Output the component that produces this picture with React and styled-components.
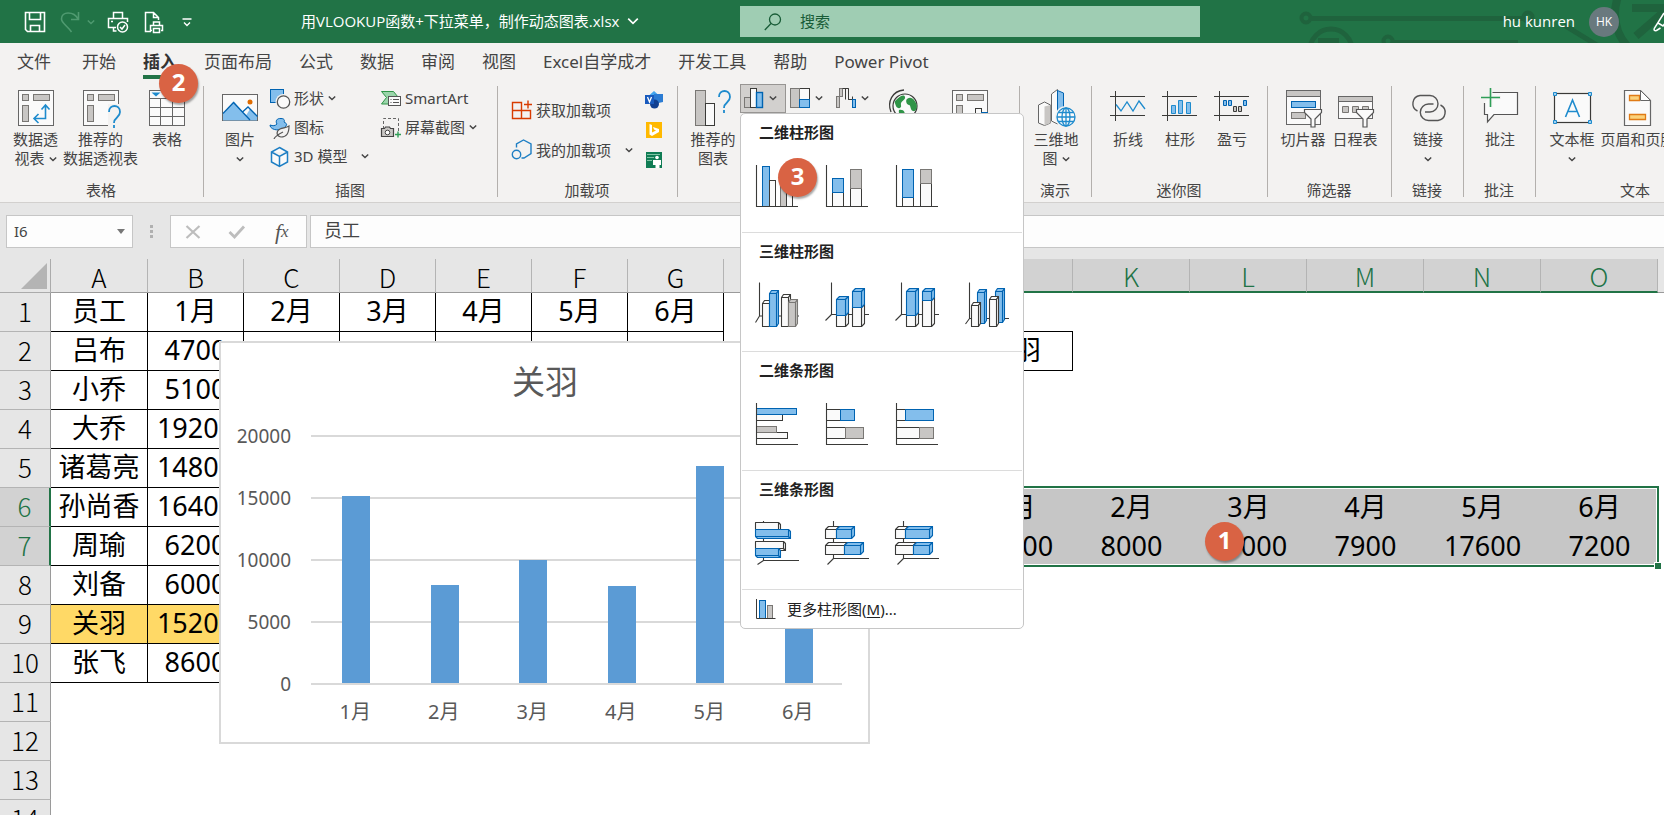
import React, { useState } from 'react';
import styled, { createGlobalStyle, css } from 'styled-components';

const GREEN = '#217346';
const BLUE = '#0063b1';
const BLUE_FILL = '#83beec';
const LINE = '#3a3a38';
const GRAY = '#797774';
const GRAY_FILL = '#c8c6c4';
const WHITE_FILL = '#fafafa';

/* ---------- small drawing helpers ---------- */

const R = ({ x, y, w, h, fill = WHITE_FILL, stroke = LINE, sw = 1 }) => (
  <rect x={x} y={y} width={w} height={h} fill={fill} stroke={stroke} strokeWidth={sw} />
);

const kinds = {
  blue: { fill: BLUE_FILL, stroke: BLUE },
  white: { fill: WHITE_FILL, stroke: LINE },
  gray: { fill: GRAY_FILL, stroke: GRAY },
};

// x1, y1, x2, y2 of the front face, dx and dy are the depth of the solid
const Box3 = ({ a, k = 'white', dx = 3, dy = -3 }) => {
  const [x1, y1, x2, y2] = a;
  const c = kinds[k];
  const edge = dy < 0 ? y1 : y2;
  return (
    <g fill={c.fill} stroke={c.stroke} strokeWidth="1.1" strokeLinejoin="round">
      <path d={`M${x1} ${edge}l${dx} ${dy}H${x2 + dx}L${x2} ${edge}z`} />
      <path d={`M${x2} ${y1}l${dx} ${dy}V${y2 + dy}L${x2} ${y2}z`} />
      <path d={`M${x1} ${y1}H${x2}V${y2}H${x1}z`} />
    </g>
  );
};

const Flat = ({ a, k = 'white' }) => {
  const [x1, y1, x2, y2] = a;
  return <R x={x1} y={y1} w={x2 - x1} h={y2 - y1} {...kinds[k]} />;
};

const Axis = ({ d = 'M2.5 2V43.5H44' }) => (
  <path d={d} fill="none" stroke={LINE} strokeWidth="1.1" />
);

const Chevron = ({ size = 8, color = '#444', sw = 1.4 }) => (
  <svg width={size} height={size} viewBox="0 0 8 8" fill="none" stroke={color} strokeWidth={sw}>
    <path d="M.8 2.4L4 5.6l3.2-3.2" />
  </svg>
);

const Svg = ({ s = 40, children }) => (
  <svg width={s} height={s} viewBox={`0 0 ${s} ${s}`} fill="none">
    {children}
  </svg>
);

/* ---------- ribbon icons ---------- */

const PivotBase = () => (
  <>
    <R x={2.5} y={2.5} w={35} h={35} stroke="#666" />
    <R x={6.5} y={6.5} w={6} h={6} {...kinds.gray} />
    <R x={17.5} y={6.5} w={16} h={6} {...kinds.gray} />
    <R x={6.5} y={17.5} w={6} h={16} {...kinds.gray} />
  </>
);

const PivotIcon = () => (
  <Svg>
    <PivotBase />
    <path d="M29.5 18v12.5H19M25.5 21.5l4-4.5 4 4.5M22.500 26l-4.500 4.500 4.500 4.500" stroke="#1e8bcd" strokeWidth="1.6" />
  </Svg>
);

const PivotSuggestIcon = () => (
  <Svg>
    <PivotBase />
    <path d="M27 16h13v24H27z" fill="#f3f2f1" />
    <path d="M28 24c0-8 11-8 11 0 0 6-6 5-6 11M33 37v3" stroke="#1e8bcd" strokeWidth="1.8" />
  </Svg>
);

const TableIcon = () => (
  <Svg>
    <R x={2.5} y={2.5} w={35} h={35} stroke="#666" />
    <path d="M2.5 10.5h35M2.5 19.5h35M2.5 28.5h35M13.5 10.5v27M25.5 10.5v27" stroke="#666" />
    <path d="M4.5 4.5h9l-4.5 4z" fill="#1e8bcd" />
  </Svg>
);

const PictureIcon = () => (
  <Svg>
    <R x={2.5} y={6.5} w={35} h={26} stroke="#666" />
    <path d="M3 26l11-12.5 12 14 4-6.5 7 7v4.5H3z" fill={BLUE_FILL} />
    <path d="M3 25.5l10.500-11L30 32M22.500 24l5.500-5 9.500 9.500" stroke={BLUE} strokeWidth="1.3" />
    <circle cx="30" cy="14" r="2.5" fill="#e06c00" />
  </Svg>
);

const ChartSuggestIcon = () => (
  <Svg>
    <R x={2.5} y={2.5} w={10} h={35} {...kinds.gray} />
    <R x={12.5} y={15.5} w={9} h={22} />
    <path d="M26 9c0-8 11-8 11 0 0 6-6 5-6 11M31 22v3" stroke="#1e8bcd" strokeWidth="1.8" />
  </Svg>
);

const GlobeIcon = () => (
  <Svg>
    <circle cx="21" cy="18" r="12" fill={WHITE_FILL} stroke={LINE} strokeWidth="1.2" />
    <path d="M12 12c4-4 8-6 9-3s-5 4-4 8-4 4-5 1-2-4 0-6zM23 11c4-3 7 0 9 4s0 9-3 8-2-6-4-6-4-4-2-6zM15 22c5-1 7 3 5 7-3 0-6-3-5-7z" fill="#2f9447" />
    <path d="M7 24C3 14 8 3 20 2" stroke={LINE} strokeWidth="1.3" />
  </Svg>
);

const PivotChartIcon = () => (
  <Svg>
    <PivotBase />
    <R x={25.5} y={20.5} w={6} h={17} />
    <R x={31.5} y={24.5} w={6} h={13} {...kinds.blue} />
  </Svg>
);

const Map3dIcon = () => (
  <Svg>
    <path d="M2.5 17l6-3 6 3v18l-6 2.500-6-2.500z" fill={WHITE_FILL} stroke="#666" />
    <path d="M8.5 18.5l6-1.5v18l-6 2.5z" fill={GRAY_FILL} />
    <path d="M15.5 6l6-4.500V36l-6-3z" fill={WHITE_FILL} stroke="#666" />
    <path d="M21.5 2.5l6 2.5v18l-6 6z" fill={BLUE_FILL} stroke={BLUE} />
    <circle cx="30" cy="29" r="11" fill="#f3f2f1" />
    <g stroke="#1e8bcd" strokeWidth="1.3">
      <circle cx="30" cy="29" r="9" fill={WHITE_FILL} />
      <ellipse cx="30" cy="29" rx="4" ry="9" />
      <path d="M30 20v18M21 29h18M22.5 24.5h15M22.5 33.5h15" />
    </g>
  </Svg>
);

const SparkFrame = () => (
  <path d="M2 8.5h35M2 27.5h35M7.5 3v30" stroke={LINE} />
);

const SparkLineIcon = () => (
  <Svg>
    <SparkFrame />
    <path d="M8 16.5l5 6.5 6-9 6 9 6-10 6 8" stroke="#1e8bcd" strokeWidth="1.3" />
  </Svg>
);

const SparkColumnIcon = () => (
  <Svg>
    <SparkFrame />
    <g fill={BLUE_FILL} stroke="#1e8bcd">
      <path d="M11.5 17.5h4v8h-4zM18.5 12.5h4v13h-4zM26.5 14.5h4v11h-4z" />
    </g>
  </Svg>
);

const WinLossIcon = () => (
  <Svg>
    <SparkFrame />
    <path d="M11.5 12.5h3v5h-3zM16.5 12.5h3v5h-3zM31.5 12.5h3v5h-3z" fill={BLUE_FILL} stroke={BLUE} />
    <path d="M21.5 18.5h3v5h-3zM26.5 18.5h3v5h-3z" fill={GRAY_FILL} stroke={LINE} />
  </Svg>
);

const Funnel = () => (
  <path d="M21.5 21.5h17v3l-6.5 6.5v8h-4v-8l-6.5-6.5z" fill={WHITE_FILL} stroke="#555" strokeWidth="1.2" />
);

const SlicerIcon = () => (
  <Svg>
    <R x={3.5} y={2.5} w={34} h={34} stroke="#666" />
    <R x={3.5} y={2.5} w={34} h={6} fill={GRAY_FILL} stroke="#666" />
    <R x={8.5} y={13.5} w={24} h={6} {...kinds.blue} />
    <R x={8.5} y={24.5} w={14} h={6} {...kinds.gray} />
    <Funnel />
  </Svg>
);

const TimelineIcon = () => (
  <Svg>
    <R x={3.5} y={8.5} w={34} h={22} stroke="#666" />
    <R x={3.5} y={8.5} w={34} h={5} fill={GRAY_FILL} stroke="#666" />
    <path d="M7.5 18.5h6v6h-6zM17.5 18.5h6v6h-6zM27.5 18.5h6v3h-6z" fill={GRAY_FILL} stroke={GRAY} />
    <Funnel />
  </Svg>
);

const LinkIcon = () => (
  <Svg>
    <g stroke="#555" strokeWidth="1.4">
      <path d="M9.5 23A8.200 8.200 0 0112 7.500h10a8.200 8.200 0 018 8.200c0 4.500-3.500 8.300-8 8.300h-5" />
      <path d="M32.500 17A8.200 8.200 0 0130 32.500H20.500a8.200 8.200 0 01-8.200-8.200c0-4.500 3.700-8.300 8.200-8.300h5" />
    </g>
  </Svg>
);

const CommentIcon = () => (
  <Svg>
    <path d="M12 4.5h25.5v22H14l-6.5 7.5v-7.5H4.500V15" fill={WHITE_FILL} stroke="#555" strokeWidth="1.2" />
    <path d="M2 9.5h19M11 0v19" stroke="#f3f2f1" strokeWidth="3" />
    <path d="M1 9.5h19M10.5 0v19" stroke="#2f9e57" strokeWidth="1.6" />
  </Svg>
);

const TextBoxIcon = () => (
  <Svg>
    <R x={2.5} y={5.5} w={36} h={29} sw={1.2} />
    <path d="M13.5 29l7-17 7 17M16 23.5h9" stroke="#1e8bcd" strokeWidth="1.6" />
    <g fill="#9fd0f0" stroke="#1e8bcd">
      <path d="M1.5 4.5h3v3h-3zM36.5 4.5h3v3h-3zM1.5 32.5h3v3h-3zM36.5 32.5h3v3h-3z" />
    </g>
  </Svg>
);

const HeaderFooterIcon = () => (
  <Svg>
    <path d="M6.5 2.5h16l10 10v25h-26z" fill={WHITE_FILL} stroke="#666" strokeWidth="1.2" />
    <path d="M11.5 7.5h10v5h-10zM11.5 26.5h16v5h-16z" fill="#fbd27b" stroke="#e07b16" strokeWidth="1.3" />
    <path d="M22.5 2.5v10h10z" fill="#fff" stroke="#666" />
  </Svg>
);

const ShapesIcon = () => (
  <Svg s={22}>
    <R x={1.5} y={1.5} w={13} h={13} {...kinds.blue} />
    <circle cx="14.5" cy="14" r="8" fill="#f3f2f1" />
    <circle cx="14.5" cy="14" r="6.2" fill={WHITE_FILL} stroke="#555" strokeWidth="1.3" />
  </Svg>
);

const GlyphsIcon = () => (
  <Svg s={22}>
    <path d="M1 8c3 1 5 1 7-1C6 4 8 1 12 1.5c3 0 4 1.5 3 3.5 2 1 3 2 2.500 3-2 5-12 7-16 2z" fill={BLUE_FILL} stroke={BLUE} />
    <path d="M20 9c0 8-3 11-8 11-5-1-5-6-1-8 3-1.500 6-1 9-3zM5 22c1-3 5-5 9-7" fill="#f3f2f1" stroke="#555" strokeWidth="1.2" />
  </Svg>
);

const CubeIcon = () => (
  <Svg s={22}>
    <path d="M10.5 1.5l8 4.500v10l-8 4.500-8-4.500V6zM2.500 6l8 4.500 8-4.500M10.500 10.500v10" stroke="#1e7fc4" strokeWidth="1.5" fill="#fafafa" />
  </Svg>
);

const SmartArtIcon = () => (
  <Svg s={22}>
    <path d="M1.5 3.5h12l4.5 5.5H9v7H1.500l5-6.500z" fill="#9bd5ab" stroke="#2f9447" />
    <R x={8.5} y={8.5} w={12} h={9} stroke="#555" />
    <path d="M10.5 11.5h1M13 11.5h6M10.5 14.5h1M13 14.5h6" stroke="#555" />
  </Svg>
);

const ScreenshotIcon = () => (
  <Svg s={22}>
    <path d="M3.5 12V1.5h15v13" stroke="#666" strokeDasharray="3 2" />
    <path d="M1.5 11.5h3l1-1.500h4l1 1.500h3v8h-12z" fill="#c8c6c4" stroke="#444" strokeWidth="1.2" />
    <circle cx="7.5" cy="15.5" r="2.3" fill="#fff" stroke="#444" />
    <path d="M15 17.5h6M18 14.5v6" stroke="#2f9e57" strokeWidth="1.4" />
  </Svg>
);

const GetAddinsIcon = () => (
  <Svg s={22}>
    <path d="M1.5 3.5h9v8h-9zM1.5 11.5h9v8h-9zM10.5 11.5h9v8h-9z" stroke="#d83b01" strokeWidth="1.4" />
    <path d="M13 5.5h8M17 1.5v8" stroke="#d83b01" strokeWidth="1.4" />
  </Svg>
);

const MyAddinsIcon = () => (
  <Svg s={22}>
    <path d="M5.5 8.5V5l7-4 7.500 4v9.500l-7 4.500h-2.500" stroke="#1e7fc4" strokeWidth="1.4" />
    <circle cx="5.5" cy="15.5" r="4.2" stroke="#1e7fc4" strokeWidth="1.4" />
  </Svg>
);

const VisioIcon = () => (
  <Svg s={22}>
    <path d="M11 2l5 4.5-5 4.5-5-4.5z" fill="#41a5ee" />
    <path d="M11 5h9v8l-9 2z" fill="#2b7cd3" />
    <circle cx="11.5" cy="15" r="4.5" fill="#103f91" />
    <path d="M2 6h9v9H2z" fill="#185abd" />
    <path d="M4.5 8l2 5 2-5" stroke="#fff" strokeWidth="1.3" />
  </Svg>
);

const BingIcon = () => (
  <Svg s={22}>
    <path d="M3 3h16v16H3z" fill="#ffb900" />
    <path d="M6.5 5l2.500 1v7.500l4-2-2-1-1-2.500 6 2v3L9 17l-2.500-1.500z" fill="#fff" />
  </Svg>
);

const PeopleGraphIcon = () => (
  <Svg s={22}>
    <path d="M3 3h16v16H3z" fill="#107c54" />
    <path d="M4 5.5h13M4 8.5h7M4 11.5h5" stroke="#7fc4a4" strokeWidth="1.2" />
    <circle cx="14" cy="8.5" r="1.8" fill="#fff" />
    <path d="M10 11h8v5h-1.500v3h-4v-3H10z" fill="#fff" />
  </Svg>
);

const ColumnChartIcon = () => (
  <Svg s={22}>
    <R x={1.5} y={10.5} w={6} h={10} {...kinds.gray} />
    <R x={7.5} y={1.5} w={6} h={19} />
    <R x={13.5} y={5.5} w={6} h={15} {...kinds.blue} sw={1.4} />
  </Svg>
);

const TreemapIcon = () => (
  <Svg s={22}>
    <R x={1.5} y={1.5} w={19} h={19} />
    <R x={1.5} y={1.5} w={9} h={19} {...kinds.gray} />
    <R x={10.5} y={12.5} w={10} h={8} {...kinds.blue} />
  </Svg>
);

const WaterfallIcon = () => (
  <Svg s={22}>
    <R x={1.5} y={9.5} w={3} h={11} {...kinds.gray} />
    <R x={4.5} y={1.5} w={3} h={8} {...kinds.gray} />
    <path d="M7.5 1.5h6v11h3M10.5 1.5v11M13.5 1.5v11h4v-3" stroke={LINE} />
    <R x={17.5} y={12.5} w={3} h={8} {...kinds.blue} />
  </Svg>
);

/* ---------- chart gallery tiles, 48 x 48 ---------- */

const GALLERY = [
  {
    title: '二维柱形图',
    tiles: [
      {
        name: '簇状柱形图',
        badge: 3,
        art: (
          <>
            <Flat a={[8.5, 3.5, 15.5, 43.5]} k="blue" />
            <Flat a={[15.5, 17.5, 21.5, 43.5]} />
            <Flat a={[26.5, 22.5, 32.5, 43.5]} k="gray" />
            <Flat a={[32.5, 12.5, 38.5, 43.5]} />
            <Axis />
          </>
        ),
      },
      {
        name: '堆积柱形图',
        art: (
          <>
            <Flat a={[8.5, 29.5, 19.5, 43.5]} />
            <Flat a={[8.5, 15.5, 19.5, 29.5]} k="blue" />
            <Flat a={[26.5, 25.5, 37.5, 43.5]} />
            <Flat a={[26.5, 6.5, 37.5, 25.5]} k="gray" />
            <Axis />
          </>
        ),
      },
      {
        name: '百分比堆积柱形图',
        art: (
          <>
            <Flat a={[8.5, 34.5, 19.5, 43.5]} />
            <Flat a={[8.5, 6.5, 19.5, 34.5]} k="blue" />
            <Flat a={[26.5, 20.5, 37.5, 43.5]} />
            <Flat a={[26.5, 6.5, 37.5, 20.5]} k="gray" />
            <Axis />
          </>
        ),
      },
    ],
  },
  {
    title: '三维柱形图',
    tiles: [
      {
        name: '三维簇状柱形图',
        art: (
          <>
            <Axis d="M5.5 .5V34H45M5.5 34L1.5 40.5" />
            <Box3 a={[8.5, 21.5, 15.5, 44.5]} dx={2} dy={-3} />
            <Box3 a={[15.5, 11.5, 22.5, 44.5]} k="blue" dx={2} dy={-3} />
            <Box3 a={[27.5, 15.5, 34.5, 44.5]} dx={2} dy={-3} />
            <Box3 a={[34.5, 20.5, 41.5, 44.5]} k="gray" dx={2} dy={-3} />
          </>
        ),
      },
      {
        name: '三维堆积柱形图',
        art: (
          <>
            <Axis d="M7.5 .5V32.5H45M7.5 32.5L1.5 38.5" />
            <Box3 a={[12.5, 33.5, 21.5, 44.5]} />
            <Box3 a={[12.5, 17.5, 21.5, 33.5]} k="blue" />
            <Box3 a={[28.5, 25.5, 37.5, 44.5]} />
            <Box3 a={[28.5, 9.5, 37.5, 25.5]} k="blue" />
          </>
        ),
      },
      {
        name: '三维百分比堆积柱形图',
        art: (
          <>
            <Axis d="M7.5 .5V32.5H45M7.5 32.5L1.5 38.5" />
            <Box3 a={[12.5, 33.5, 21.5, 44.5]} />
            <Box3 a={[12.5, 9.5, 21.5, 33.5]} k="blue" />
            <Box3 a={[28.5, 18.5, 37.5, 44.5]} />
            <Box3 a={[28.5, 9.5, 37.5, 18.5]} k="blue" />
          </>
        ),
      },
      {
        name: '三维柱形图',
        art: (
          <>
            <Axis d="M5.5 .5V36.5H45M5.5 36.5L1.5 42" />
            <Box3 a={[13.5, 10.5, 20.5, 41.5]} k="blue" dx={2} dy={-3} />
            <Box3 a={[7.5, 23.5, 14.5, 44.5]} dx={2} dy={-3} />
            <Box3 a={[31.5, 9.5, 38.5, 40.5]} k="blue" dx={2} dy={-3} />
            <Box3 a={[25.5, 17.5, 32.5, 44.5]} dx={2} dy={-3} />
          </>
        ),
      },
    ],
  },
  {
    title: '二维条形图',
    tiles: [
      {
        name: '簇状条形图',
        art: (
          <>
            <Flat a={[2.5, 13.5, 28.5, 19.5]} />
            <Flat a={[2.5, 7.5, 42.5, 13.5]} k="blue" />
            <Flat a={[2.5, 31.5, 33.5, 37.5]} />
            <Flat a={[2.5, 25.5, 22.5, 31.5]} k="gray" />
            <Axis />
          </>
        ),
      },
      {
        name: '堆积条形图',
        art: (
          <>
            <Flat a={[2.5, 8.5, 16.5, 19.5]} />
            <Flat a={[16.5, 8.5, 30.5, 19.5]} k="blue" />
            <Flat a={[2.5, 26.5, 21.5, 37.5]} />
            <Flat a={[21.5, 26.5, 39.5, 37.5]} k="gray" />
            <Axis />
          </>
        ),
      },
      {
        name: '百分比堆积条形图',
        art: (
          <>
            <Flat a={[2.5, 8.5, 11.5, 19.5]} />
            <Flat a={[11.5, 8.5, 39.5, 19.5]} k="blue" />
            <Flat a={[2.5, 26.5, 25.5, 37.5]} />
            <Flat a={[25.5, 26.5, 39.5, 37.5]} k="gray" />
            <Axis />
          </>
        ),
      },
    ],
  },
  {
    title: '三维条形图',
    tiles: [
      {
        name: '三维簇状条形图',
        art: (
          <>
            <Axis d="M9.5 1V40.5H45M9.5 40.5L3.5 44.5" />
            <Box3 a={[1.5, 2.5, 24.5, 9.5]} dx={2} dy={2} />
            <Box3 a={[1.5, 9.5, 34.5, 16.5]} k="blue" dx={2} dy={2} />
            <Box3 a={[1.5, 21.5, 29.5, 28.5]} dx={2} dy={2} />
            <Box3 a={[1.5, 28.5, 24.5, 35.5]} k="blue" dx={2} dy={2} />
          </>
        ),
      },
      {
        name: '三维堆积条形图',
        art: (
          <>
            <Axis d="M9.5 1V38.5H45M9.5 38.5L3.5 44.5" />
            <Box3 a={[1.5, 9.5, 12.5, 18.5]} />
            <Box3 a={[12.5, 9.5, 27.5, 18.5]} k="blue" />
            <Box3 a={[1.5, 25.5, 20.5, 34.5]} />
            <Box3 a={[20.5, 25.5, 36.5, 34.5]} k="blue" />
          </>
        ),
      },
      {
        name: '三维百分比堆积条形图',
        art: (
          <>
            <Axis d="M9.5 1V38.5H45M9.5 38.5L3.5 44.5" />
            <Box3 a={[1.5, 9.5, 11.5, 18.5]} />
            <Box3 a={[11.5, 9.5, 35.5, 18.5]} k="blue" />
            <Box3 a={[1.5, 25.5, 19.5, 34.5]} />
            <Box3 a={[19.5, 25.5, 35.5, 34.5]} k="blue" />
          </>
        ),
      },
    ],
  },
];

/* ---------- title bar ---------- */

const QuickAccess = () => (
  <QuickBar>
    <QuickButton aria-label="保存">
      <svg width="24" height="24" viewBox="0 0 24 24" fill="none" stroke="#fff" strokeWidth="1.6">
        <path d="M2.5 2.5h19v19H4.5l-2-2zM6.5 2.5v7h11v-7M7.5 21.5v-6h9v6" />
      </svg>
    </QuickButton>
    <QuickButton aria-label="恢复" $left={12}>
      <svg width="24" height="24" viewBox="0 0 24 24" fill="none" stroke="#4f9a70" strokeWidth="1.6">
        <path d="M19.5 2v7.5H12M19 9C15 1 2 1 2.500 9c0 4 6 7 10 13" />
      </svg>
    </QuickButton>
    <QuickButton aria-label="恢复列表" $w={16}>
      <Chevron color="#4f9a70" />
    </QuickButton>
    <QuickButton aria-label="打印预览" $left={7}>
      <svg width="24" height="24" viewBox="0 0 24 24" fill="none" stroke="#fff" strokeWidth="1.5">
        <path d="M7.5 8V2.5h9V8M10 17.5H2.5v-9h19V12M5 11.5h2M7.5 17v4h3" />
        <circle cx="16.5" cy="17" r="5" />
        <path d="M14 17l2 2 3-4" />
      </svg>
    </QuickButton>
    <QuickButton aria-label="快速打印" $left={12}>
      <svg width="24" height="24" viewBox="0 0 24 24" fill="none" stroke="#fff" strokeWidth="1.5">
        <path d="M9 21.5H3.5v-19h8l5 5V10M11.5 2.5v5h5M11.5 15v-3h6v3M10 20.5H8.500v-5h12v5H19M11.500 18.500h6v4h-6z" />
      </svg>
    </QuickButton>
    <QuickButton aria-label="自定义快速访问工具栏" $left={9}>
      <svg width="12" height="12" viewBox="0 0 12 12" fill="none" stroke="#fff" strokeWidth="1.4">
        <path d="M1.5 3h9M3 6.5L6 9.5l3-3" />
      </svg>
    </QuickButton>
  </QuickBar>
);

const TitleBar = () => (
  <TitleBarRow>
    <TitleLeft>
      <QuickAccess />
      <FileName>
        用VLOOKUP函数+下拉菜单，制作动态图表.xlsx
        <Chevron size={12} color="#fff" sw={1.1} />
      </FileName>
    </TitleLeft>
    <SearchBox>
      <svg width="18" height="18" viewBox="0 0 18 18" fill="none" stroke="#185c37" strokeWidth="1.3">
        <circle cx="11" cy="6.5" r="5.5" />
        <path d="M7 10.5L.8 17" />
      </svg>
      <input type="text" placeholder="搜索" aria-label="搜索" />
    </SearchBox>
    <Account>
      <Circuit viewBox="0 0 404 43" fill="none" stroke="#1f633d" strokeWidth="5">
        <circle cx="46" cy="18" r="4.5" strokeWidth="4" />
        <path d="M51 18.5h212" />
        <circle cx="268" cy="17" r="4.5" strokeWidth="4" />
        <circle cx="71" cy="50" r="21" />
        <path d="M58 40.5h21" />
        <circle cx="128" cy="41" r="4.5" strokeWidth="4" />
        <path d="M133 42.5h125M304 25l36 22" />
        <circle cx="403" cy="14" r="48" strokeWidth="8" />
        <path d="M372 8h40M406 10l-30 26" strokeWidth="8" />
      </Circuit>
      <UserName>hu kunren</UserName>
      <Avatar>HK</Avatar>
      <PenButton aria-label="墨迹">
        <svg width="22" height="24" viewBox="0 0 22 24" fill="none" stroke="#fff" strokeWidth="1.5">
          <path d="M11 3L1.5 18c-1 2 0 3 2 2.500l4-2.500M5 13l5 3 4-6" />
        </svg>
      </PenButton>
    </Account>
  </TitleBarRow>
);

/* ---------- ribbon ---------- */

const TABS = ['文件', '开始', '插入', '页面布局', '公式', '数据', '审阅', '视图', 'Excel自学成才', '开发工具', '帮助', 'Power Pivot'];

const Big = ({ icon, lines = [], drop, w, label }) => (
  <BigButton $w={w} aria-label={label}>
    {icon}
    {lines.map((line, i) => (
      <BigLine key={line}>
        {line}
        {drop === 'inline' && i === lines.length - 1 && <Chevron />}
      </BigLine>
    ))}
    {drop === 'below' && (
      <BigLine>
        <Chevron />
      </BigLine>
    )}
  </BigButton>
);

const Small = ({ icon, text, drop, far, h }) => (
  <SmallButton $h={h}>
    {icon}
    <span>{text}</span>
    {drop && (
      <ChevronGap $far={far}>
        <Chevron />
      </ChevronGap>
    )}
  </SmallButton>
);

const ChartMenu = () => (
  <Menu>
    {GALLERY.map((section) => (
      <MenuSection key={section.title}>
        <MenuTitle>{section.title}</MenuTitle>
        <TileRow>
          {section.tiles.map((tile) => (
            <Tile key={tile.name} aria-label={tile.name}>
              <Svg s={48}>{tile.art}</Svg>
              {tile.badge && <Badge $left={24} $top={-5}>{tile.badge}</Badge>}
            </Tile>
          ))}
        </TileRow>
      </MenuSection>
    ))}
    <MoreButton>
      <Svg s={22}>
        <Flat a={[4.5, 2.5, 10.5, 20.5]} k="blue" />
        <Flat a={[12.5, 7.5, 17.5, 20.5]} k="gray" />
        <path d="M1.5 1v19.5h19" stroke={LINE} />
      </Svg>
      <span>
        更多柱形图(<u>M</u>)...
      </span>
    </MoreButton>
  </Menu>
);

const Ribbon = () => {
  const [menuOpen, setMenuOpen] = useState(true);

  return (
    <RibbonPanel>
      <TabRow>
        {TABS.map((tab) => (
          <Tab key={tab} href="#" $active={tab === '插入'}>
            {tab}
            {tab === '插入' && <Badge $left={16} $top={21}>2</Badge>}
          </Tab>
        ))}
      </TabRow>
      <Groups>
        <Group $w={204}>
          <GroupBody $left={8}>
            <Big w={55} icon={<PivotIcon />} lines={['数据透', '视表']} drop="inline" />
            <Big w={75} icon={<PivotSuggestIcon />} lines={['推荐的', '数据透视表']} />
            <Big w={58} icon={<TableIcon />} lines={['表格']} />
          </GroupBody>
          <GroupLabel>表格</GroupLabel>
        </Group>
        <Group $w={294}>
          <GroupBody $left={7}>
            <Big w={58} icon={<PictureIcon />} lines={['图片']} drop="below" />
            <Stack $w={111}>
              <Small icon={<ShapesIcon />} text="形状" drop />
              <Small icon={<GlyphsIcon />} text="图标" />
              <Small icon={<CubeIcon />} text="3D 模型" drop far />
            </Stack>
            <Stack $w={110}>
              <Small icon={<SmartArtIcon />} text="SmartArt" />
              <Small icon={<ScreenshotIcon />} text="屏幕截图" drop />
            </Stack>
          </GroupBody>
          <GroupLabel>插图</GroupLabel>
        </Group>
        <Group $w={180}>
          <GroupBody $left={13}>
            <Stack $w={132} $top={6}>
              <Small h={40} icon={<GetAddinsIcon />} text="获取加载项" />
              <Small h={40} icon={<MyAddinsIcon />} text="我的加载项" drop far />
            </Stack>
            <MiniStack>
              <MiniButton aria-label="Visio Data Visualizer"><VisioIcon /></MiniButton>
              <MiniButton aria-label="必应地图"><BingIcon /></MiniButton>
              <MiniButton aria-label="人物图"><PeopleGraphIcon /></MiniButton>
            </MiniStack>
          </GroupBody>
          <GroupLabel>加载项</GroupLabel>
        </Group>
        <Group $w={342}>
          <GroupBody $left={8}>
            <Big w={54} icon={<ChartSuggestIcon />} lines={['推荐的', '图表']} />
            <ChartButtonWrap>
              <ChartButton aria-label="插入柱形图或条形图" aria-expanded={menuOpen} $open={menuOpen} onClick={() => setMenuOpen(!menuOpen)}>
                <ColumnChartIcon />
                <Chevron />
              </ChartButton>
              {menuOpen && <ChartMenu />}
            </ChartButtonWrap>
            <ChartButton aria-label="插入层次结构图表">
              <TreemapIcon />
              <Chevron />
            </ChartButton>
            <ChartButton aria-label="插入瀑布图">
              <WaterfallIcon />
              <Chevron />
            </ChartButton>
            <Big w={52} icon={<GlobeIcon />} label="地图" />
            <Big w={80} icon={<PivotChartIcon />} label="数据透视图" />
          </GroupBody>
        </Group>
        <Group $w={72}>
          <GroupBody $left={9}>
            <Big w={54} icon={<Map3dIcon />} lines={['三维地', '图']} drop="inline" />
          </GroupBody>
          <GroupLabel>演示</GroupLabel>
        </Group>
        <Group $w={176}>
          <GroupBody $left={10}>
            <Big w={52} icon={<SparkLineIcon />} lines={['折线']} />
            <Big w={52} icon={<SparkColumnIcon />} lines={['柱形']} />
            <Big w={52} icon={<WinLossIcon />} lines={['盈亏']} />
          </GroupBody>
          <GroupLabel>迷你图</GroupLabel>
        </Group>
        <Group $w={124}>
          <GroupBody $left={9}>
            <Big w={52} icon={<SlicerIcon />} lines={['切片器']} />
            <Big w={52} icon={<TimelineIcon />} lines={['日程表']} />
          </GroupBody>
          <GroupLabel>筛选器</GroupLabel>
        </Group>
        <Group $w={72}>
          <GroupBody $left={9}>
            <Big w={54} icon={<LinkIcon />} lines={['链接']} drop="below" />
          </GroupBody>
          <GroupLabel>链接</GroupLabel>
        </Group>
        <Group $w={72}>
          <GroupBody $left={9}>
            <Big w={54} icon={<CommentIcon />} lines={['批注']} />
          </GroupBody>
          <GroupLabel>批注</GroupLabel>
        </Group>
        <Group $w={200}>
          <GroupBody $left={8}>
            <Big w={56} icon={<TextBoxIcon />} lines={['文本框']} drop="below" />
            <Big w={76} icon={<HeaderFooterIcon />} lines={['页眉和页脚']} />
          </GroupBody>
          <GroupLabel>文本</GroupLabel>
        </Group>
      </Groups>
    </RibbonPanel>
  );
};

/* ---------- formula bar ---------- */

const FormulaBar = () => (
  <FormulaRow>
    <NameBox>
      <input type="text" defaultValue="I6" aria-label="名称框" />
      <button aria-label="名称列表">
        <svg width="8" height="5" viewBox="0 0 8 5" fill="#777">
          <path d="M0 0h8L4 5z" />
        </svg>
      </button>
    </NameBox>
    <Dots>
      <i />
      <i />
      <i />
    </Dots>
    <FormulaTools>
      <button aria-label="取消">
        <svg width="16" height="14" viewBox="0 0 16 14" stroke="#bdbdbd" strokeWidth="2.2">
          <path d="M1.5 1l13 12M14.5 1l-13 12" />
        </svg>
      </button>
      <button aria-label="输入">
        <svg width="18" height="14" viewBox="0 0 18 14" fill="none" stroke="#bdbdbd" strokeWidth="2.8">
          <path d="M1.5 7l5 5L16 1.5" />
        </svg>
      </button>
      <FxButton aria-label="插入函数">
        f<small>x</small>
      </FxButton>
    </FormulaTools>
    <FormulaInput type="text" defaultValue="员工" aria-label="编辑栏" />
  </FormulaRow>
);

/* ---------- worksheet ---------- */

const COLUMNS = 'ABCDEFGHIJKLMNOP'.split('');
const WIDTHS = [97, 96, 96, 96, 96, 96, 96, 115, 117, 117, 117, 117, 117, 117, 117];
const SELECTED_COLS = 'IJKLMNO';
const SELECTED_ROWS = [6, 7];

const MONTHS = ['1月', '2月', '3月', '4月', '5月', '6月'];
const SALES = [15200, 8000, 10000, 7900, 17600, 7200];

const STAFF = [
  ['吕布', 4700],
  ['小乔', 5100],
  ['大乔', 19200],
  ['诸葛亮', 14800],
  ['孙尚香', 16400],
  ['周瑜', 6200],
  ['刘备', 6000],
  ['关羽', 15200],
  ['张飞', 8600],
];

const cellValue = (col, row) => {
  const i = COLUMNS.indexOf(col);
  if (row === 1 && i < 7) return i === 0 ? '员工' : MONTHS[i - 1];
  if (row > 1 && row < 11 && i < 2) return STAFF[row - 2][i];
  if (row === 2 && col === 'J') return '关羽';
  if (row === 6 && i > 8 && i < 15) return MONTHS[i - 9];
  if (row === 7 && i > 8 && i < 15) return SALES[i - 9];
  return null;
};

const SalesChart = () => {
  const left = 92;
  const base = 343;
  const unit = 62 / 5000;
  const step = 531 / 6;

  return (
    <ChartFrame width="651" height="403" viewBox="0 0 651 403" role="img" aria-label="关羽">
      <rect x="1" y="1" width="649" height="401" fill="#fff" stroke="#d9d9d9" strokeWidth="2" />
      <text x="326" y="53" fontSize="33" textAnchor="middle">关羽</text>
      {[0, 5000, 10000, 15000, 20000].map((v) => (
        <g key={v}>
          <path d={`M${left} ${base - v * unit}h531`} stroke="#d9d9d9" strokeWidth="2" />
          <text x="72" y={base - v * unit + 7} fontSize="19" textAnchor="end">{v}</text>
        </g>
      ))}
      {SALES.map((v, i) => {
        const top = Math.round(base - v * unit);
        return (
          <g key={MONTHS[i]}>
            <rect x={Math.round(left + step * i + 31)} y={top} width="28" height={base - 1 - top} fill="#5b9bd5" />
            <text x={left + step * (i + 0.5)} y="378" fontSize="20" textAnchor="middle">{MONTHS[i]}</text>
          </g>
        );
      })}
    </ChartFrame>
  );
};

const Sheet = () => (
  <SheetArea>
    <Grid>
      <colgroup>
        <col width="51" />
        {WIDTHS.map((w, i) => (
          <col key={COLUMNS[i]} width={w} />
        ))}
        <col />
      </colgroup>
      <thead>
        <tr>
          <Corner aria-label="全选">
            <svg width="26" height="26" viewBox="0 0 26 26" fill="#b4b4b4">
              <path d="M26 0v26H0z" />
            </svg>
          </Corner>
          {COLUMNS.map((col) => (
            <ColHead key={col} scope="col" $on={SELECTED_COLS.includes(col)}>
              {col === 'P' ? null : col}
            </ColHead>
          ))}
        </tr>
      </thead>
      <tbody>
        {Array.from({ length: 14 }, (_, r) => r + 1).map((row) => (
          <tr key={row}>
            <RowHead scope="row" $on={SELECTED_ROWS.includes(row)}>{row}</RowHead>
            {COLUMNS.map((col, i) => (
              <Cell
                key={col}
                $lined={row < 11 && i < 7}
                $boxed={row === 2 && (col === 'J' || col === 'I')}
                $gold={row === 9 && i < 7}
                $on={SELECTED_ROWS.includes(row) && SELECTED_COLS.includes(col)}
              >
                {cellValue(col, row)}
                {row === 6 && col === 'I' && <Selection />}
                {row === 7 && col === 'L' && <Badge $left={15} $top={-5}>1</Badge>}
              </Cell>
            ))}
          </tr>
        ))}
      </tbody>
    </Grid>
    <SalesChart />
  </SheetArea>
);

function App() {
  return (
    <>
      <GlobalStyle />
      <Window>
        <TitleBar />
        <Ribbon />
        <FormulaBar />
        <Sheet />
      </Window>
    </>
  );
}

/* ---------- styles ---------- */

const GlobalStyle = createGlobalStyle`
  *, *::before, *::after {
    box-sizing: border-box;
  }
  body {
    margin: 0;
    font-family: 'Noto Sans', 'Noto Sans CJK SC', sans-serif;
    font-size: 15px;
    color: #444;
  }
  button, input {
    font: inherit;
    color: inherit;
    border: 0;
    padding: 0;
    margin: 0;
    background: none;
  }
  svg {
    display: block;
    flex: none;
  }
`;

const Window = styled.div`
  display: flex;
  flex-direction: column;
  height: 100vh;
  overflow: hidden;
  background: #fff;
`;

const TitleBarRow = styled.header`
  display: grid;
  grid-template-columns: 740fr 460fr 464fr;
  align-items: center;
  flex: none;
  height: 43px;
  background: ${GREEN};
  color: #fff;
  font-family: 'Open Sans', 'Noto Sans CJK SC', sans-serif;
`;

const TitleLeft = styled.div`
  display: flex;
  align-items: center;
`;

const QuickBar = styled.div`
  display: flex;
  align-items: center;
  flex: 0 0 301px;
  padding-left: 23px;
`;

const QuickButton = styled.button`
  display: flex;
  align-items: center;
  justify-content: center;
  width: ${(p) => p.$w || 24}px;
  height: 24px;
  margin-left: ${(p) => p.$left || 0}px;
`;

const FileName = styled.div`
  display: flex;
  align-items: center;
  gap: 8px;
  padding-bottom: 1px;
  line-height: 20px;
  white-space: nowrap;
`;

const SearchBox = styled.label`
  display: flex;
  align-items: center;
  gap: 18px;
  height: 31px;
  padding-left: 24px;
  background: #9fcdb3;
  color: #185c37;
  input {
    flex: 1;
    padding-bottom: 1px;
    outline: 0;
  }
  input::placeholder {
    color: #185c37;
    opacity: 1;
  }
`;

const Account = styled.div`
  position: relative;
  display: flex;
  align-items: center;
  justify-content: flex-end;
  height: 43px;
  overflow: hidden;
`;

const Circuit = styled.svg`
  position: absolute;
  top: 0;
  right: 0;
  width: 404px;
  height: 43px;
`;

const UserName = styled.span`
  position: relative;
  padding-bottom: 2px;
  line-height: 20px;
`;

const Avatar = styled.span`
  position: relative;
  width: 30px;
  height: 30px;
  margin-left: 14px;
  border-radius: 50%;
  background: #69797e;
  font-size: 12px;
  line-height: 30px;
  text-align: center;
`;

const PenButton = styled.button`
  position: relative;
  width: 11px;
  margin-left: 34px;
`;

const RibbonPanel = styled.div`
  position: relative;
  z-index: 2;
  flex: none;
  background: #f3f2f1;
  border-bottom: 1px solid #d2d0ce;
`;

const TabRow = styled.nav`
  position: relative;
  z-index: 1;
  display: flex;
  gap: 27px;
  height: 41px;
  padding-left: 17px;
`;

const Tab = styled.a`
  position: relative;
  height: 36px;
  font-size: 17px;
  line-height: 38px;
  color: #444;
  text-decoration: none;
  white-space: nowrap;
  &:first-child {
    margin-right: 4px;
  }
  ${(p) =>
    p.$active &&
    css`
      font-weight: 700;
      color: #333;
      border-bottom: 4px solid ${GREEN};
    `}
`;

const Badge = styled.span`
  position: absolute;
  z-index: 3;
  left: ${(p) => p.$left}px;
  top: ${(p) => p.$top}px;
  width: 39px;
  height: 39px;
  border-radius: 50%;
  background: #d96344;
  box-shadow: 1px 2px 2px rgba(0, 0, 0, 0.35);
  color: #fff;
  font-size: 24px;
  font-weight: 700;
  line-height: 36px;
  text-align: center;
`;

const Groups = styled.div`
  display: flex;
  height: 118px;
  padding-bottom: 5px;
`;

const Group = styled.section`
  position: relative;
  display: flex;
  flex-direction: column;
  flex: 0 0 ${(p) => p.$w}px;
  &::after {
    content: '';
    position: absolute;
    top: 2px;
    right: 0;
    bottom: 0;
    width: 1px;
    background: #b3b0ad;
  }
`;

const GroupBody = styled.div`
  display: flex;
  align-items: flex-start;
  height: 97px;
  padding-left: ${(p) => p.$left}px;
`;

const GroupLabel = styled.div`
  height: 16px;
  padding-right: 2px;
  line-height: 18px;
  text-align: center;
`;

const BigButton = styled.button`
  display: flex;
  flex-direction: column;
  align-items: center;
  width: ${(p) => p.$w}px;
  padding-top: 4px;
  white-space: nowrap;
  & > svg {
    margin-bottom: 2px;
  }
`;

const BigLine = styled.span`
  display: flex;
  align-items: center;
  gap: 4px;
  height: 19px;
  line-height: 19px;
`;

const Stack = styled.div`
  display: flex;
  flex-direction: column;
  width: ${(p) => p.$w}px;
  padding-top: ${(p) => p.$top || 0}px;
`;

const SmallButton = styled.button`
  display: flex;
  align-items: center;
  gap: 3px;
  height: ${(p) => p.$h || 29}px;
  line-height: 20px;
  white-space: nowrap;
  span {
    padding-bottom: 1px;
  }
`;

const ChevronGap = styled.span`
  margin-left: ${(p) => (p.$far ? 11 : 1)}px;
`;

const MiniStack = styled.div`
  display: flex;
  flex-direction: column;
  gap: 8px;
  padding-top: 5px;
`;

const MiniButton = styled.button`
  width: 22px;
  height: 22px;
`;

const ChartButtonWrap = styled.div`
  position: relative;
`;

const ChartButton = styled.button`
  display: flex;
  align-items: center;
  gap: 4px;
  width: 46px;
  height: 29px;
  padding: 0 0 1px 2px;
  border: 1px solid ${(p) => (p.$open ? '#979593' : 'transparent')};
  background: ${(p) => (p.$open ? '#d2d0ce' : 'none')};
`;

const Menu = styled.div`
  position: absolute;
  z-index: 5;
  top: 100%;
  left: 0;
  width: 284px;
  border: 1px solid #c6c6c6;
  border-radius: 5px;
  background: #fff;
`;

const MenuSection = styled.section`
  padding: 8px 0 21px;
  margin: 0 1px;
  border-bottom: 1px solid #dcdcdc;
`;

const MenuTitle = styled.h3`
  margin: 0 0 21px 17px;
  font-size: 15px;
  font-weight: 700;
  line-height: 20px;
  color: #222;
`;

const TileRow = styled.div`
  display: flex;
  gap: 22px;
  padding-left: 12px;
`;

const Tile = styled.button`
  position: relative;
  width: 48px;
  height: 48px;
`;

const MoreButton = styled.button`
  display: flex;
  align-items: center;
  gap: 10px;
  width: 100%;
  height: 38px;
  padding: 0 0 1px 14px;
  line-height: 20px;
  color: #222;
  u {
    text-underline-offset: 2px;
  }
`;

const FormulaRow = styled.div`
  display: flex;
  flex: none;
  padding: 12px 0 11px 6px;
  background: #e6e6e6;
`;

const field = css`
  height: 33px;
  border: 1px solid #c6c6c6;
  background: #fdfdfd;
`;

const NameBox = styled.div`
  ${field}
  display: flex;
  width: 127px;
  padding: 0 7px;
  input {
    flex: 1;
    min-width: 0;
    padding-bottom: 2px;
    outline: 0;
  }
`;

const Dots = styled.div`
  display: flex;
  flex-direction: column;
  align-items: center;
  justify-content: center;
  gap: 2px;
  width: 37px;
  i {
    width: 3px;
    height: 3px;
    background: #b0b0b0;
  }
`;

const FormulaTools = styled.div`
  ${field}
  display: flex;
  width: 137px;
  padding-right: 2px;
  margin-right: 3px;
  button {
    display: flex;
    flex: 1;
    align-items: center;
    justify-content: center;
  }
`;

const FxButton = styled.button`
  font-family: 'Liberation Serif', serif;
  font-size: 22px;
  font-style: italic;
  color: #555;
  small {
    font-size: 17px;
  }
`;

const FormulaInput = styled.input`
  && {
    ${field}
    flex: 1;
    min-width: 0;
    padding: 0 0 5px 13px;
    font-size: 18px;
    border-right: 0;
    outline: 0;
  }
`;

const SheetArea = styled.main`
  position: relative;
  flex: 1;
  overflow: hidden;
`;

const Grid = styled.table`
  width: 100%;
  table-layout: fixed;
  border-collapse: separate;
  border-spacing: 0;
`;

const head = css`
  height: 34px;
  padding: 0;
  font-family: 'Noto Sans CJK SC', sans-serif;
  font-size: 26px;
  font-weight: 300;
  line-height: 30px;
  color: #000;
  background: #e6e6e6;
`;

const Corner = styled.th`
  ${head}
  border-right: 1px solid #ababab;
  border-bottom: 1px solid #ababab;
  svg {
    margin: 1px 3px 0 auto;
  }
`;

const ColHead = styled.th`
  ${head}
  padding-top: 2px;
  border-right: 1px solid #b4b4b4;
  border-bottom: 1px solid #9a9a9a;
  &:last-child {
    border-right: 0;
  }
  ${(p) =>
    p.$on &&
    css`
      background: #d2d2d2;
      color: ${GREEN};
      border-bottom: 2px solid ${GREEN};
    `}
`;

const RowHead = styled.th`
  ${head}
  height: 39px;
  padding-bottom: 2px;
  border-right: 1px solid #9a9a9a;
  border-bottom: 1px solid #b4b4b4;
  ${(p) =>
    p.$on &&
    css`
      background: #d2d2d2;
      color: ${GREEN};
      border-right: 2px solid ${GREEN};
    `}
`;

const Cell = styled.td`
  position: relative;
  height: 39px;
  padding: 0 0 2px;
  font-size: 27px;
  line-height: 34px;
  color: #000;
  text-align: center;
  white-space: nowrap;
  background: ${(p) => (p.$gold ? '#ffd966' : p.$on ? '#c6c6c6' : 'none')};
  ${(p) =>
    (p.$lined || p.$boxed) &&
    css`
      border-right: 1px solid #000;
      border-bottom: 1px solid #000;
    `}
  ${(p) => p.$boxed && 'box-shadow: 0 -1px 0 #000;'}
`;

// outline of the seven by two cell range
const Selection = styled.span`
  position: absolute;
  z-index: 1;
  left: -2px;
  top: -2px;
  width: 822px;
  height: 81px;
  border: 2px solid ${GREEN};
  box-shadow: inset 0 0 0 1px #fff;
  &::after {
    content: '';
    position: absolute;
    right: -4px;
    bottom: -4px;
    width: 7px;
    height: 7px;
    border: solid #fff;
    border-width: 1px 0 0 1px;
    background: ${GREEN};
  }
`;

const ChartFrame = styled.svg`
  position: absolute;
  z-index: 1;
  left: 219px;
  top: 82px;
  fill: #595959;
`;

export default App;
